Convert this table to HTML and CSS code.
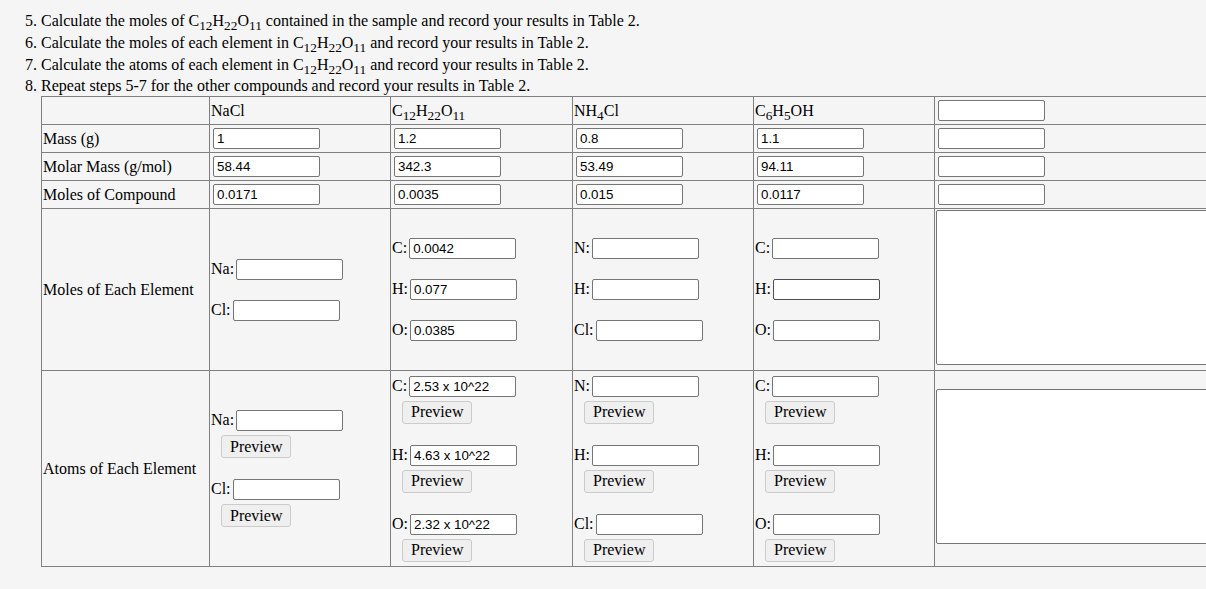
FILE: index.html
```html
<!DOCTYPE html>
<html>
<head>
<meta charset="utf-8">
<title>Table 2</title>
<link rel="stylesheet" href="styles.css">
</head>
<body>
<div class="page">
  <div class="steps">
    <div class="step">5. Calculate the moles of C<sub>12</sub>H<sub>22</sub>O<sub>11</sub> contained in the sample and record your results in Table 2.</div>
    <div class="step">6. Calculate the moles of each element in C<sub>12</sub>H<sub>22</sub>O<sub>11</sub> and record your results in Table 2.</div>
    <div class="step">7. Calculate the atoms of each element in C<sub>12</sub>H<sub>22</sub>O<sub>11</sub> and record your results in Table 2.</div>
    <div class="step last">8. Repeat steps 5-7 for the other compounds and record your results in Table 2.</div>
  </div>
  <table class="data">
    <colgroup>
      <col class="c1"><col class="c2"><col class="c3"><col class="c4"><col class="c5"><col class="c6">
    </colgroup>
    <tr>
      <td></td>
      <td>NaCl</td>
      <td>C<sub>12</sub>H<sub>22</sub>O<sub>11</sub></td>
      <td>NH<sub>4</sub>Cl</td>
      <td>C<sub>6</sub>H<sub>5</sub>OH</td>
      <td><input class="box" value=""></td>
    </tr>
    <tr>
      <td class="name">Mass (g)</td>
      <td><input class="box" value="1"></td>
      <td><input class="box" value="1.2"></td>
      <td><input class="box" value="0.8"></td>
      <td><input class="box" value="1.1"></td>
      <td><input class="box" value=""></td>
    </tr>
    <tr>
      <td class="name">Molar Mass (g/mol)</td>
      <td><input class="box" value="58.44"></td>
      <td><input class="box" value="342.3"></td>
      <td><input class="box" value="53.49"></td>
      <td><input class="box" value="94.11"></td>
      <td><input class="box" value=""></td>
    </tr>
    <tr>
      <td class="name">Moles of Compound</td>
      <td><input class="box" value="0.0171"></td>
      <td><input class="box" value="0.0035"></td>
      <td><input class="box" value="0.015"></td>
      <td><input class="box" value="0.0117"></td>
      <td><input class="box" value=""></td>
    </tr>
    <tr>
      <td class="name">Moles of Each Element</td>
      <td>
        <div class="stack moles">
          <div class="fld">Na:<input class="box" value=""></div>
          <div class="fld">Cl:<input class="box" value=""></div>
        </div>
      </td>
      <td>
        <div class="stack moles">
          <div class="fld">C:<input class="box" value="0.0042"></div>
          <div class="fld">H:<input class="box" value="0.077"></div>
          <div class="fld">O:<input class="box" value="0.0385"></div>
        </div>
      </td>
      <td>
        <div class="stack moles">
          <div class="fld">N:<input class="box" value=""></div>
          <div class="fld">H:<input class="box" value=""></div>
          <div class="fld">Cl:<input class="box" value=""></div>
        </div>
      </td>
      <td>
        <div class="stack moles">
          <div class="fld">C:<input class="box" value=""></div>
          <div class="fld">H:<input class="box hot" value=""></div>
          <div class="fld">O:<input class="box" value=""></div>
        </div>
      </td>
      <td class="notes"><textarea class="memo"></textarea></td>
    </tr>
    <tr>
      <td class="name atoms">Atoms of Each Element</td>
      <td>
        <div class="stack atomset">
          <div class="grp">
            <div class="fld">Na:<input class="box" value=""></div>
            <div class="btnrow"><button class="pv">Preview</button></div>
          </div>
          <div class="grp">
            <div class="fld">Cl:<input class="box" value=""></div>
            <div class="btnrow"><button class="pv">Preview</button></div>
          </div>
        </div>
      </td>
      <td>
        <div class="stack atomset">
          <div class="grp">
            <div class="fld">C:<input class="box" value="2.53 x 10^22"></div>
            <div class="btnrow"><button class="pv">Preview</button></div>
          </div>
          <div class="grp">
            <div class="fld">H:<input class="box" value="4.63 x 10^22"></div>
            <div class="btnrow"><button class="pv">Preview</button></div>
          </div>
          <div class="grp">
            <div class="fld">O:<input class="box" value="2.32 x 10^22"></div>
            <div class="btnrow"><button class="pv">Preview</button></div>
          </div>
        </div>
      </td>
      <td>
        <div class="stack atomset">
          <div class="grp">
            <div class="fld">N:<input class="box" value=""></div>
            <div class="btnrow"><button class="pv">Preview</button></div>
          </div>
          <div class="grp">
            <div class="fld">H:<input class="box" value=""></div>
            <div class="btnrow"><button class="pv">Preview</button></div>
          </div>
          <div class="grp">
            <div class="fld">Cl:<input class="box" value=""></div>
            <div class="btnrow"><button class="pv">Preview</button></div>
          </div>
        </div>
      </td>
      <td>
        <div class="stack atomset">
          <div class="grp">
            <div class="fld">C:<input class="box" value=""></div>
            <div class="btnrow"><button class="pv">Preview</button></div>
          </div>
          <div class="grp">
            <div class="fld">H:<input class="box" value=""></div>
            <div class="btnrow"><button class="pv">Preview</button></div>
          </div>
          <div class="grp">
            <div class="fld">O:<input class="box" value=""></div>
            <div class="btnrow"><button class="pv">Preview</button></div>
          </div>
        </div>
      </td>
      <td><textarea class="memo"></textarea></td>
    </tr>
  </table>
</div>
</body>
</html>
```

FILE: styles.css
```css
html, body {
  margin: 0;
  padding: 0;
  background: #f5f5f5;
}

body {
  font-family: "Liberation Serif", "Times New Roman", serif;
  font-size: 16px;
  color: #000;
}

.page {
  width: 1206px;
  height: 589px;
  overflow: hidden;
}

.steps {
  padding: 10px 0 0 25px;
}

.step {
  height: 22px;
  line-height: 22px;
  white-space: nowrap;
}

.step.last {
  height: 20px;
  line-height: 20px;
}

sub {
  font-size: 13.33px;
  line-height: 0;
  vertical-align: sub;
}

.data {
  border-collapse: collapse;
  table-layout: fixed;
  width: 1213px;
  margin-left: 41px;
}

.c1 { width: 168px; }
.c2 { width: 181px; }
.c3 { width: 182px; }
.c4 { width: 181px; }
.c5 { width: 181px; }
.c6 { width: 320px; }

.data td {
  border: 1px solid #808080;
  padding: 1px;
  vertical-align: middle;
  white-space: nowrap;
}

.data td.notes {
  vertical-align: top;
}

.data td.atoms {
  height: 193px;
}

.box {
  box-sizing: border-box;
  width: 107px;
  height: 21px;
  margin: 2px;
  padding: 1px 3px;
  border: 1px solid #767676;
  border-radius: 2px;
  background: #fff;
  font-family: "Liberation Sans", Arial, sans-serif;
  font-size: 13.33px;
  color: #000;
  vertical-align: baseline;
  outline: none;
}

.box.hot {
  border-color: #4f4f4f;
}

.memo {
  box-sizing: border-box;
  width: 300px;
  height: 155px;
  margin: 0;
  padding: 2px;
  border: 1px solid #767676;
  border-radius: 2px;
  background: #fff;
  resize: none;
  vertical-align: baseline;
  font-family: "Liberation Mono", monospace;
  font-size: 13.33px;
}

.stack {
  display: flex;
  flex-direction: column;
}

.fld {
  height: 25px;
  white-space: nowrap;
}

.stack.moles .fld + .fld {
  margin-top: 16px;
}

.grp + .grp {
  margin-top: 17px;
}

.btnrow {
  height: 27px;
  padding-left: 8px;
}

.pv {
  box-sizing: border-box;
  height: 23px;
  margin: 2px;
  padding: 1px 8px;
  border: 1px solid #cbcbcb;
  border-radius: 3px;
  background: #efefef;
  font-family: "Liberation Serif", "Times New Roman", serif;
  font-size: 16px;
  line-height: 18px;
  color: #000;
}
```
